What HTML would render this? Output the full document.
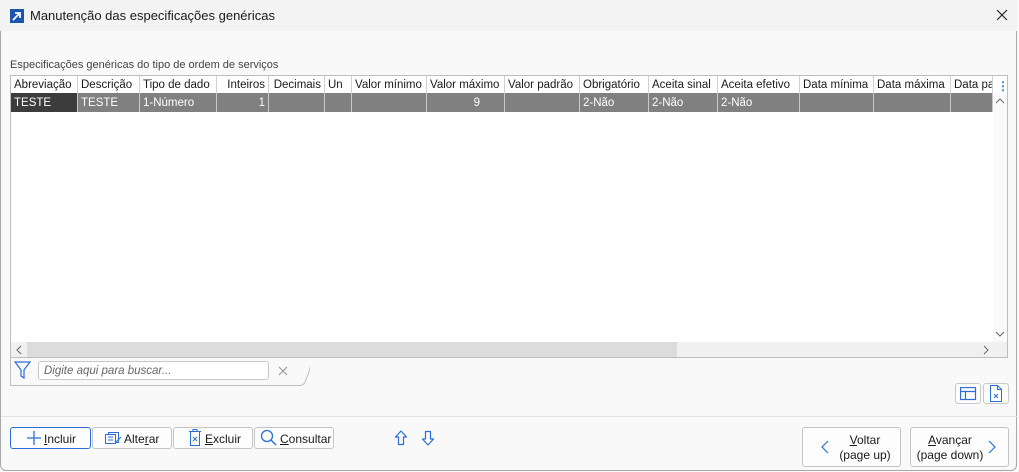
<!DOCTYPE html>
<html><head><meta charset="utf-8"><style>
*{box-sizing:border-box;margin:0;padding:0}
body{width:1019px;height:472px;overflow:hidden;background:#fafafa;font-family:"Liberation Sans",Arial,sans-serif;font-size:12px;color:#1a1a1a;position:relative}
.a{position:absolute}
#win{left:0;top:0;width:1017px;height:471px;border:1px solid #a8a8a8;border-radius:6px;background:#f9f9f9;overflow:hidden}
#title{left:0;top:0;width:1017px;height:31px;background:#f3f3f3}
.th,.td{position:absolute;height:18px;line-height:17px;padding:0 3px;white-space:nowrap;overflow:hidden;font-size:11.5px}
.th{top:76px;background:#fff;border-right:1px solid #d0d0d0;border-bottom:1px solid #d0d0d0;line-height:19px}
.td{top:93px;height:19px;background:#808080;color:#fff;border-right:1px solid #c8c8c8;line-height:20px}
.btn{position:absolute;top:427px;height:22px;border:1px solid #c4c4c4;border-radius:3px;background:#fdfdfd;font-size:12px;line-height:20px}
u{text-decoration:underline}
</style></head><body>
<div id="win" class="a"></div>
<div id="title" class="a"></div>
<div class="a" style="left:10px;top:9px;width:14px;height:14px;background:#1a55b0"></div>
<svg class="a" style="left:10px;top:9px" width="14" height="14"><path d="M3 11 L10 4 M5 4 H10 V9" stroke="#fff" stroke-width="1.8" fill="none"/></svg>
<div class="a" style="left:30px;top:8px;font-size:13px">Manutenção das especificações genéricas</div>
<svg class="a" style="left:996px;top:9px" width="12" height="12"><path d="M1 1L11 11M11 1L1 11" stroke="#222" stroke-width="1.2"/></svg>
<div class="a" style="left:10px;top:59px;font-size:11px;color:#444">Especificações genéricas do tipo de ordem de serviços</div>
<div class="a" style="left:10px;top:75px;width:998px;height:283px;border:1px solid #bdbdbd;background:#fff"></div>
<div class="th" style="left:11px;width:67px">Abreviação</div>
<div class="th" style="left:78px;width:62px">Descrição</div>
<div class="th" style="left:140px;width:77px">Tipo de dado</div>
<div class="th" style="left:217px;width:52px;text-align:right">Inteiros</div>
<div class="th" style="left:269px;width:56px;text-align:right">Decimais</div>
<div class="th" style="left:325px;width:27px">Un</div>
<div class="th" style="left:352px;width:75px">Valor mínimo</div>
<div class="th" style="left:427px;width:78px">Valor máximo</div>
<div class="th" style="left:505px;width:75px">Valor padrão</div>
<div class="th" style="left:580px;width:69px">Obrigatório</div>
<div class="th" style="left:649px;width:69px">Aceita sinal</div>
<div class="th" style="left:718px;width:82px">Aceita efetivo</div>
<div class="th" style="left:800px;width:74px">Data mínima</div>
<div class="th" style="left:874px;width:77px">Data máxima</div>
<div class="th" style="left:951px;width:42px">Data padrão</div>
<div class="a" style="left:997px;top:79px;color:#3a7bd5;font-size:12px;font-weight:bold">⋮</div>
<div class="td" style="left:11px;width:67px;background:#3c3c3c">TESTE</div>
<div class="td" style="left:78px;width:62px">TESTE</div>
<div class="td" style="left:140px;width:77px">1-Número</div>
<div class="td" style="left:217px;width:52px;text-align:right">1</div>
<div class="td" style="left:269px;width:56px"></div>
<div class="td" style="left:325px;width:27px"></div>
<div class="td" style="left:352px;width:75px"></div>
<div class="td" style="left:427px;width:78px;text-align:right;padding-right:24px">9</div>
<div class="td" style="left:505px;width:75px"></div>
<div class="td" style="left:580px;width:69px">2-Não</div>
<div class="td" style="left:649px;width:69px">2-Não</div>
<div class="td" style="left:718px;width:82px">2-Não</div>
<div class="td" style="left:800px;width:74px"></div>
<div class="td" style="left:874px;width:77px"></div>
<div class="td" style="left:951px;width:42px"></div>
<div class="a" style="left:993px;top:93px;width:14px;height:249px;background:#fafafa"></div>
<svg class="a" style="left:995px;top:97px" width="10" height="8"><path d="M1 6L5 2L9 6" stroke="#666" fill="none"/></svg>
<svg class="a" style="left:995px;top:330px" width="10" height="8"><path d="M1 2L5 6L9 2" stroke="#666" fill="none"/></svg>
<div class="a" style="left:11px;top:342px;width:996px;height:15px;background:#f0f0f0"></div>
<div class="a" style="left:27px;top:342px;width:650px;height:15px;background:#dcdcdc"></div>
<svg class="a" style="left:15px;top:345px" width="8" height="10"><path d="M6 1L2 5L6 9" stroke="#666" fill="none"/></svg>
<svg class="a" style="left:982px;top:345px" width="8" height="10"><path d="M2 1L6 5L2 9" stroke="#666" fill="none"/></svg>
<svg class="a" style="left:10px;top:357px" width="300" height="30"><path d="M0.5 0 V28.5 H290 Q294 28 295 25 L299 15 Q302 1 305 0" stroke="#bdbdbd" fill="none"/><path d="M5 5 H20 L14 13 V21 L11 19 V13 Z" stroke="#2b6fd6" fill="none" stroke-width="1.2"/></svg>
<div class="a" style="left:38px;top:361px;width:231px;height:19px;border:1px solid #c8c8c8;border-radius:3px;background:#fff;font-style:italic;color:#666;font-size:11.5px;padding-left:5px;line-height:18px">Digite aqui para buscar...</div>
<svg class="a" style="left:278px;top:366px" width="10" height="10"><path d="M1 1L9 9M9 1L1 9" stroke="#999" stroke-width="1.2"/></svg>
<div class="a" style="left:955px;top:383px;width:26px;height:21px;border:1px solid #c8c8c8;border-radius:3px;background:#fdfdfd"></div>
<svg class="a" style="left:960px;top:387px" width="17" height="14"><rect x="0.5" y="0.5" width="15" height="12" stroke="#2b6fd6" fill="none" stroke-width="1.2"/><path d="M0.5 4.5H15.5M5.5 4.5V12.5" stroke="#2b6fd6" stroke-width="1.2"/></svg>
<div class="a" style="left:983px;top:383px;width:26px;height:21px;border:1px solid #c8c8c8;border-radius:3px;background:#fdfdfd"></div>
<svg class="a" style="left:990px;top:385px" width="12" height="17"><path d="M0.5 0.5H7.5L11.5 4.5V16.5H0.5Z M7.5 0.5V4.5H11.5" stroke="#2b6fd6" fill="none"/><path d="M4 9L8 13M8 9L4 13" stroke="#2b6fd6"/></svg>
<div class="a" style="left:1px;top:416px;width:1016px;height:1px;background:#e2e2e2"></div>
<div class="btn" style="left:10px;width:81px;border-color:#2b6fd6"></div>
<svg class="a" style="left:27px;top:431px" width="14" height="14"><path d="M7 0V14M0 7H14" stroke="#2b6fd6" stroke-width="1.3"/></svg>
<div class="a" style="left:44px;top:432px"><u>I</u>ncluir</div>
<div class="btn" style="left:92px;width:80px"></div>
<svg class="a" style="left:105px;top:431px" width="18" height="14"><rect x="3.5" y="1.5" width="10" height="10" stroke="#2b6fd6" fill="none"/><rect x="0.5" y="3.5" width="10" height="9" stroke="#2b6fd6" fill="#fff"/><path d="M3 6H8M3 9H8M11 11L16 6" stroke="#2b6fd6"/></svg>
<div class="a" style="left:124px;top:432px">Alte<u>r</u>ar</div>
<div class="btn" style="left:173px;width:80px"></div>
<svg class="a" style="left:188px;top:429px" width="14" height="17"><path d="M1 2.5H13M5 2.5V0.5H9V2.5M2.5 2.5V16.5H11.5V2.5" stroke="#2b6fd6" fill="none"/><path d="M5 8L9 12M9 8L5 12" stroke="#2b6fd6"/></svg>
<div class="a" style="left:205px;top:432px"><u>E</u>xcluir</div>
<div class="btn" style="left:254px;width:80px"></div>
<svg class="a" style="left:260px;top:429px" width="18" height="18"><circle cx="7" cy="7" r="5.5" stroke="#2b6fd6" fill="none" stroke-width="1.3"/><path d="M11 11L16 16" stroke="#2b6fd6" stroke-width="1.4"/></svg>
<div class="a" style="left:280px;top:432px"><u>C</u>onsultar</div>
<svg class="a" style="left:394px;top:430px" width="14" height="16"><path d="M7 1L12.5 7H9.5V14.5H4.5V7H1.5Z" stroke="#2b6fd6" fill="none" stroke-width="1.2" stroke-linejoin="round"/></svg>
<svg class="a" style="left:421px;top:430px" width="14" height="16"><path d="M7 15L12.5 9H9.5V1.5H4.5V9H1.5Z" stroke="#2b6fd6" fill="none" stroke-width="1.2" stroke-linejoin="round"/></svg>
<div class="btn" style="left:802px;top:427px;width:99px;height:40px"></div>
<svg class="a" style="left:821px;top:440px" width="8" height="14"><path d="M7 1L1 7L7 13" stroke="#2b6fd6" fill="none" stroke-width="1.2"/></svg>
<div class="a" style="left:835px;top:433px;width:60px;text-align:center;line-height:15px"><u>V</u>oltar<br>(page up)</div>
<div class="btn" style="left:910px;top:427px;width:99px;height:40px"></div>
<svg class="a" style="left:988px;top:440px" width="8" height="14"><path d="M1 1L7 7L1 13" stroke="#2b6fd6" fill="none" stroke-width="1.2"/></svg>
<div class="a" style="left:915px;top:433px;width:70px;text-align:center;line-height:15px"><u>A</u>vançar<br>(page down)</div>
</body></html>
